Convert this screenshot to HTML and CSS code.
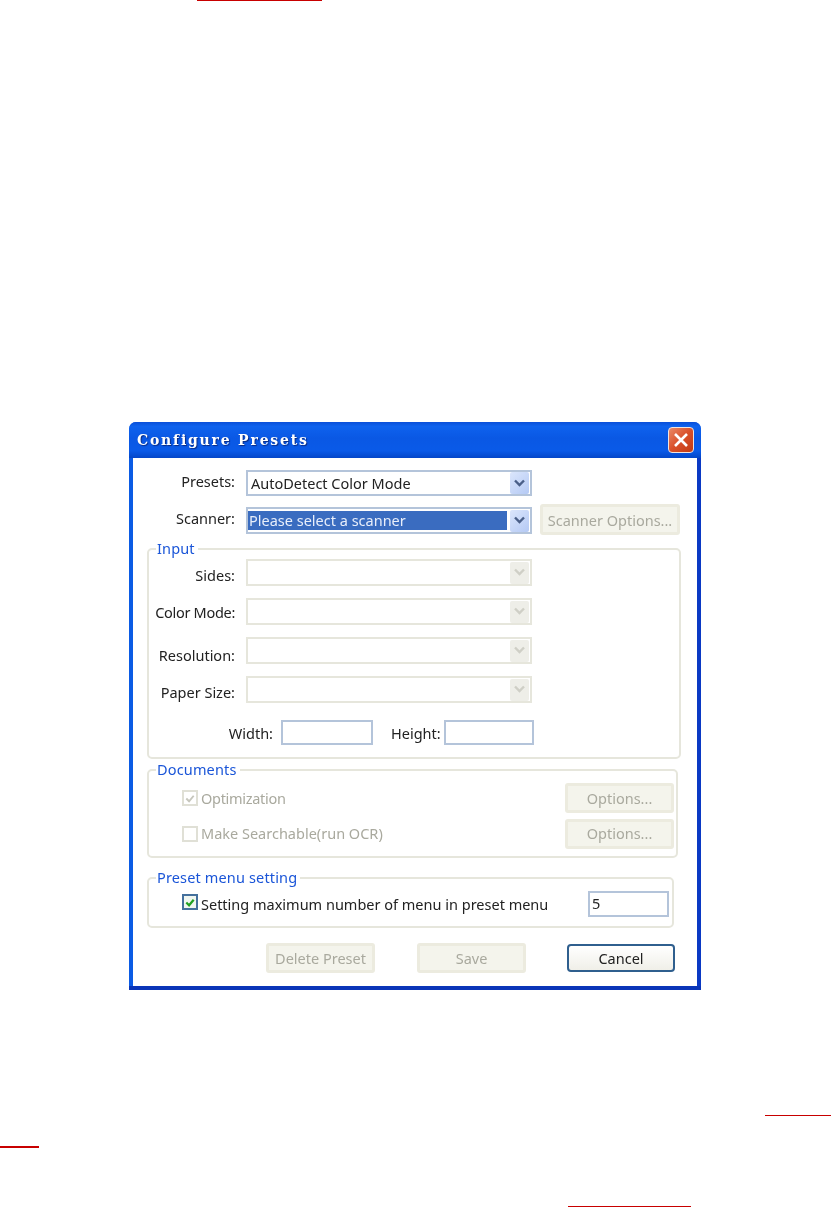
FILE: index.html
```html
<!DOCTYPE html>
<html lang="en">
<head>
<meta charset="UTF-8">
<meta name="viewport" content="width=device-width, initial-scale=1.0">
<title>Configure Presets</title>
<link rel="stylesheet" href="styles.css">
</head>
<body>
<div class="rule rule-top"></div>

<div class="dialog">
    <div class="titlebar">
        <span class="title">Configure Presets</span>
        <div class="close">
            <svg width="16" height="16" viewBox="0 0 16 16"><path d="M2 2 L14 14 M14 2 L2 14" stroke="#fff" stroke-width="2.6" fill="none"/></svg>
        </div>
    </div>

    <div class="client">
        <div class="row row-presets">
            <span class="label label-top label-up">Presets:</span>
            <div class="combo combo-short">
                <span class="combo-text">AutoDetect Color Mode</span>
                <span class="arrow"><svg width="13" height="9" viewBox="0 0 13 9"><path d="M2 1.5 L6.5 6 L11 1.5" stroke="#4a5f88" stroke-width="2.4" fill="none"/></svg></span>
            </div>
        </div>
        <div class="row row-scanner">
            <span class="label label-top">Scanner:</span>
            <div class="combo">
                <span class="combo-text selected">Please select a scanner</span>
                <span class="arrow"><svg width="13" height="9" viewBox="0 0 13 9"><path d="M2 1.5 L6.5 6 L11 1.5" stroke="#4a5f88" stroke-width="2.4" fill="none"/></svg></span>
            </div>
            <div class="btn btn-scanner">Scanner Options...</div>
        </div>

        <fieldset class="group group-input">
            <legend>Input</legend>
            <div class="row field">
                <span class="label label-group label-down">Sides:</span>
                <div class="combo off"><span class="arrow"><svg width="13" height="9" viewBox="0 0 13 9"><path d="M2 1.5 L6.5 6 L11 1.5" stroke="#cfcfc6" stroke-width="2.4" fill="none"/></svg></span></div>
            </div>
            <div class="row field">
                <span class="label label-group tight">Color Mode:</span>
                <div class="combo off"><span class="arrow"><svg width="13" height="9" viewBox="0 0 13 9"><path d="M2 1.5 L6.5 6 L11 1.5" stroke="#cfcfc6" stroke-width="2.4" fill="none"/></svg></span></div>
            </div>
            <div class="row field">
                <span class="label label-group label-down2">Resolution:</span>
                <div class="combo off"><span class="arrow"><svg width="13" height="9" viewBox="0 0 13 9"><path d="M2 1.5 L6.5 6 L11 1.5" stroke="#cfcfc6" stroke-width="2.4" fill="none"/></svg></span></div>
            </div>
            <div class="row field">
                <span class="label label-group label-down">Paper Size:</span>
                <div class="combo off"><span class="arrow"><svg width="13" height="9" viewBox="0 0 13 9"><path d="M2 1.5 L6.5 6 L11 1.5" stroke="#cfcfc6" stroke-width="2.4" fill="none"/></svg></span></div>
            </div>
            <div class="row row-size">
                <span class="label label-width">Width:</span>
                <div class="textbox box-width"></div>
                <span class="label label-height">Height:</span>
                <div class="textbox box-height"></div>
            </div>
        </fieldset>

        <fieldset class="group group-docs">
            <legend>Documents</legend>
            <div class="row doc-row">
                <span class="check off"><svg width="13" height="13" viewBox="0 0 13 13"><path d="M2.5 6.5 L5.5 9.5 L10.5 3.5" stroke="#c6c6bc" stroke-width="2" fill="none"/></svg></span>
                <span class="check-text muted tight">Optimization</span>
                <div class="btn btn-option">Options...</div>
            </div>
            <div class="row doc-row doc-row-second">
                <span class="check off"></span>
                <span class="check-text muted">Make Searchable(run OCR)</span>
                <div class="btn btn-option">Options...</div>
            </div>
        </fieldset>

        <fieldset class="group group-menu">
            <legend>Preset menu setting</legend>
            <div class="row menu-row">
                <span class="check on"><svg width="13" height="13" viewBox="0 0 13 13"><path d="M2.5 6.5 L5.5 9.5 L10.5 3.5" stroke="#21a121" stroke-width="2.4" fill="none"/></svg></span>
                <span class="check-text">Setting maximum number of menu in preset menu</span>
                <div class="textbox box-count">5</div>
            </div>
        </fieldset>

        <div class="row actions">
            <div class="btn btn-action">Delete Preset</div>
            <div class="btn btn-action btn-save">Save</div>
            <div class="btn btn-cancel">Cancel</div>
        </div>
    </div>
</div>

<div class="rule rule-right"></div>
<div class="rule rule-left"></div>
<div class="rule rule-bottom"></div>
</body>
</html>
```

FILE: styles.css
```css
html, body {
    margin: 0;
    background: #fff;
}

body {
    height: 1207px;
    overflow: hidden;
    font-family: "Noto Sans", Tahoma, sans-serif;
    font-size: 14.5px;
    color: #222;
}

/* red link underlines from the page around the dialog */
.rule {
    background: #c80000;
    height: 1px;
}
.rule-top {
    width: 125px;
    margin-left: 197px;
}
.rule-right {
    width: 66px;
    margin-left: 765px;
    margin-top: 125px;
}
.rule-left {
    width: 39px;
    height: 2px;
    margin-top: 30px;
}
.rule-bottom {
    width: 123px;
    margin-left: 568px;
    margin-top: 58px;
}

/* the source was a scaled screenshot, edges are a little soft */
.dialog {
    width: 572px;
    height: 568px;
    margin: 421px 0 0 129px;
    box-sizing: border-box;
    border-radius: 7px 7px 0 0;
    background: linear-gradient(#0a56dc, #0a5be6);
    border-bottom: 4px solid #0a35b8;
    display: flex;
    flex-direction: column;
    filter: blur(0.35px);
}

.titlebar {
    height: 36px;
    flex: none;
    display: flex;
    align-items: center;
    justify-content: space-between;
    padding: 0 7px 0 8px;
    border-radius: 7px 7px 0 0;
    background: linear-gradient(#0a4fd8 0, #0e62ee 12%, #0a58e4 45%, #0a5ae8 80%, #0446c8 100%);
}
.title {
    font-family: "DejaVu Serif", serif;
    font-weight: bold;
    font-size: 14px;
    letter-spacing: 1.8px;
    color: #fff;
    text-shadow: 1px 1px 1px #0a2a80;
}
.close {
    width: 26px;
    height: 26px;
    box-sizing: border-box;
    border: 1px solid #f2e4de;
    border-radius: 4px;
    background: linear-gradient(135deg, #ea8a68, #d9502a 50%, #c23a12);
    display: flex;
    align-items: center;
    justify-content: center;
}

.client {
    flex: 1;
    background: #fff;
    border-left: 4px solid #0b5be4;
    border-right: 4px solid #0a39c4;
    padding-top: 12px;
    margin: 0;
}

.row {
    display: flex;
    align-items: center;
}

.label {
    text-align: right;
    flex: none;
}
.label-top {
    width: 102px;
    margin-right: 11px;
}
.label-group {
    width: 86px;
    margin-right: 11px;
}
.label-up {
    margin-top: -2px;
    margin-bottom: 2px;
}
.label-down {
    margin-top: 2px;
    margin-bottom: -2px;
}
.label-down2 {
    margin-top: 4px;
    margin-bottom: -4px;
}
.tight {
    letter-spacing: -0.3px;
}

.combo {
    width: 286px;
    height: 27px;
    flex: none;
    box-sizing: border-box;
    border: 2px solid #b4c4da;
    display: flex;
    align-items: center;
    justify-content: space-between;
    padding: 0 1px 0 1px;
}
.combo-short {
    height: 26px;
}
.combo-text {
    padding-left: 2px;
    line-height: 19px;
}
.selected {
    flex: none;
    width: 259px;
    box-sizing: border-box;
    padding-left: 1px;
    margin-left: -1px;
    background: #3a6cc0;
    color: #e8eefa;
}
.arrow {
    width: 19px;
    height: 22px;
    flex: none;
    border-radius: 2px;
    margin-left: auto;
    background: linear-gradient(135deg, #dbe6fc, #b4c9f4);
    display: flex;
    align-items: center;
    justify-content: center;
}
.combo.off {
    border-color: #e6e6dc;
}
.off .arrow {
    background: #eeeee8;
}

.row-presets {
    margin-bottom: 8px;
}
.row-scanner {
    align-items: flex-start;
}
.row-scanner .label {
    margin-top: 4px;
}
.row-scanner .combo {
    margin-top: 3px;
}

.btn {
    box-sizing: border-box;
    flex: none;
    display: flex;
    align-items: center;
    justify-content: center;
    border: 3px solid #ecebdf;
    border-radius: 3px;
    background: #f4f4ec;
    color: #a9a99e;
}
.btn-scanner {
    width: 140px;
    height: 31px;
    margin-left: 8px;
}
.btn-option {
    width: 109px;
    height: 30px;
    margin-left: auto;
}
.btn-action {
    width: 109px;
    height: 30px;
}
.btn-save {
    margin-left: 42px;
}
.btn-cancel {
    width: 108px;
    height: 28px;
    margin-left: 41px;
    border: 2px solid #2f5f8e;
    border-radius: 4px;
    background: linear-gradient(#ffffff, #f0efe8);
    color: #222;
}

/* the legend hangs 7px over the top border, margins and heights count that */
.group {
    margin: 0 0 0 14px;
    padding: 0;
    box-sizing: border-box;
    min-width: 0;
    border: 2px solid #e6e6dc;
    border-radius: 5px;
}
.group legend {
    margin-left: 7px;
    padding: 0 3px 0 1px;
    height: 16px;
    line-height: 14px;
    letter-spacing: 0.15px;
    color: #1a55d8;
}
.group-input {
    width: 534px;
    height: 218px;
    margin-top: 6px;
    padding-top: 2px;
}
.group-docs {
    width: 531px;
    height: 96px;
    margin-top: 3px;
    padding: 5px 2px 0 0;
}
.group-menu {
    width: 527px;
    height: 58px;
    margin-top: 12px;
    padding: 5px 3px 0 0;
}

.field {
    margin-bottom: 12px;
}
.row-size {
    margin-top: 17px;
    height: 25px;
}
.label-width {
    width: 124px;
    margin-right: 8px;
}
.label-height {
    width: 49px;
    margin-left: 18px;
    margin-right: 4px;
}

.textbox {
    box-sizing: border-box;
    flex: none;
    border: 2px solid #b4c4da;
    height: 25px;
    line-height: 21px;
    padding-left: 2px;
}
.box-width {
    width: 92px;
}
.box-height {
    width: 90px;
}
.box-count {
    width: 81px;
    height: 26px;
    margin-left: auto;
}

.doc-row {
    height: 30px;
    padding-left: 33px;
}
.doc-row-second {
    height: 31px;
    margin-top: 5px;
}
.doc-row-second .check-text {
    margin-bottom: 2px;
}
.doc-row-second .btn {
    padding-bottom: 2px;
}
.menu-row {
    height: 26px;
    padding-left: 33px;
}

.check {
    width: 16px;
    height: 16px;
    flex: none;
    box-sizing: border-box;
    display: flex;
    align-items: center;
    justify-content: center;
}
.check.off {
    border: 2px solid #e0e0d6;
}
.check.on {
    margin-top: -2px;
    margin-bottom: 2px;
    border: 2px solid #44709c;
    background: #f0f6f0;
}
.check-text {
    margin-left: 3px;
}
.muted {
    color: #a9a99e;
}

.actions {
    margin-top: 15px;
    margin-left: 133px;
}
```
